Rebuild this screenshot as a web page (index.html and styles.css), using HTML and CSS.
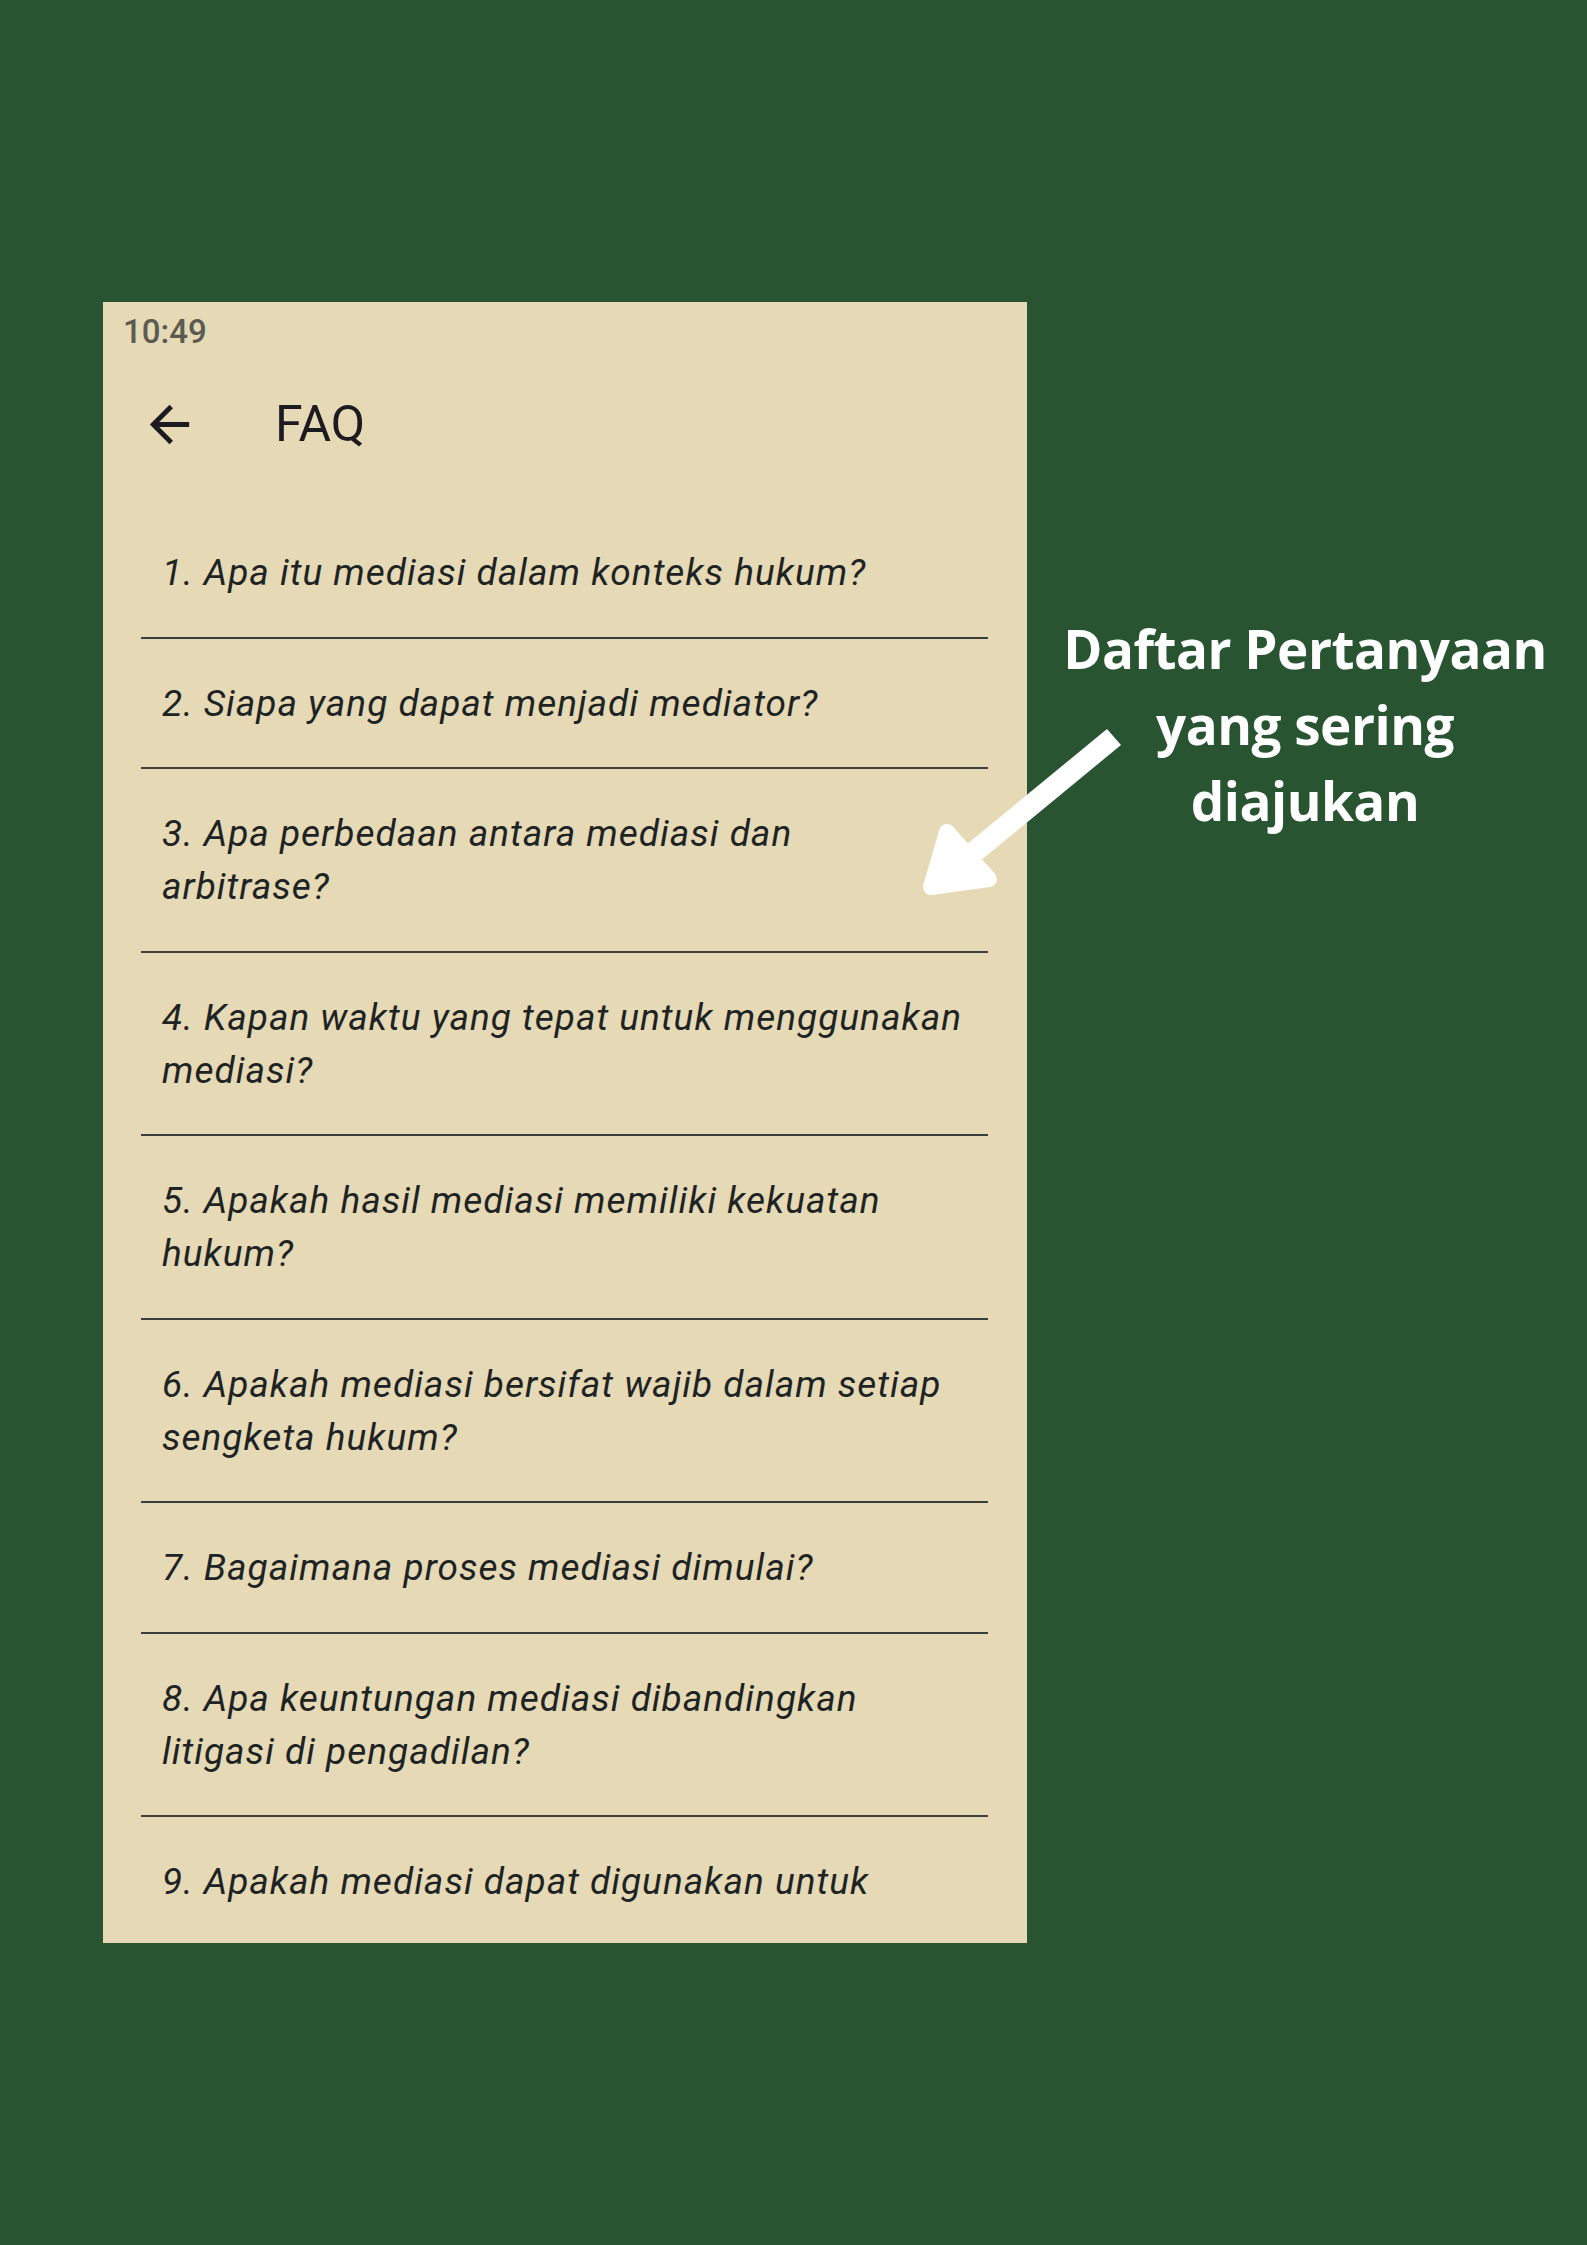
FILE: index.html
```html
<!DOCTYPE html>
<html lang="id">

<head>
    <meta charset="UTF-8">
    <meta name="viewport" content="width=device-width, initial-scale=1">
    <title>FAQ</title>
    <link rel="stylesheet" href="styles.css">
</head>

<body>
    <main class="page">
        <!-- 画面 -->
        <section class="phone">
            <div class="statusBar">
                <p class="time">10:49</p>
            </div>
            <header class="appBar">
                <button class="backButton" type="button" aria-label="Kembali">
                    <svg viewBox="0 -960 960 960" width="59" height="59">
                        <path d="M313-440l224 224-57 56-320-320 320-320 57 56-224 224h487v80H313Z" fill="#1d1b20" />
                    </svg>
                </button>
                <h1 class="appTitle">FAQ</h1>
            </header>
            <ul class="faqList">
                <li class="faqItem">1. Apa itu mediasi dalam konteks hukum?</li>
                <li class="faqItem">2. Siapa yang dapat menjadi mediator?</li>
                <li class="faqItem">3. Apa perbedaan antara mediasi dan arbitrase?</li>
                <li class="faqItem">4. Kapan waktu yang tepat untuk menggunakan mediasi?</li>
                <li class="faqItem">5. Apakah hasil mediasi memiliki kekuatan hukum?</li>
                <li class="faqItem">6. Apakah mediasi bersifat wajib dalam setiap sengketa hukum?</li>
                <li class="faqItem">7. Bagaimana proses mediasi dimulai?</li>
                <li class="faqItem">8. Apa keuntungan mediasi dibandingkan litigasi di pengadilan?</li>
                <li class="faqItem">9. Apakah mediasi dapat digunakan untuk</li>
            </ul>
        </section>

        <!-- 説明 -->
        <p class="caption">Daftar Pertanyaan<br>yang sering<br>diajukan</p>

        <svg class="pointer" viewBox="900 700 240 210" width="240" height="210">
            <polygon points="1107,729 1121,745 980,861 966,845" fill="#ffffff" />
            <polygon points="947,832 989,879 931,887" fill="#ffffff" stroke="#ffffff" stroke-width="16" stroke-linejoin="round" />
        </svg>
    </main>
</body>

</html>
```

FILE: styles.css
```css
/* リセット */
body,
ul,
li,
p,
h1 {
    margin: 0;
    padding: 0;
    box-sizing: border-box;
}

li {
    list-style: none;
}

/* レイアウト */
html {
    font-family: Roboto, 'Liberation Sans', sans-serif;
}

body {
    background-color: #285431;
}

.page {
    position: relative;
    display: flex;
    align-items: flex-start;
    min-height: 2245px;
    padding: 302px 0 0 103px;
    box-sizing: border-box;
}

/* 画面 */
.phone {
    flex-shrink: 0;
    width: 924px;
    height: 1641px;
    overflow: hidden;
    background-color: #e5d9b6;
}

.statusBar {
    height: 74px;
    padding: 10px 0 0 20px;
    box-sizing: border-box;
}

.time {
    font-size: 33px;
    font-weight: 500;
    line-height: 40px;
    color: #5c5b51;
}

.appBar {
    display: flex;
    align-items: center;
    height: 96px;
    padding-left: 37px;
}

.backButton {
    display: flex;
    padding: 0;
    border: none;
    background: none;
}

.appTitle {
    margin-left: 76px;
    font-size: 50px;
    font-weight: 400;
    line-height: 60px;
    color: #1d1b20;
}

.faqList {
    padding: 36px 39px 0 38px;
}

.faqItem {
    padding: 38px 21px 37.5px 21px;
    border-bottom: 2px solid #3b403b;
    font-size: 37px;
    font-style: italic;
    line-height: 53px;
    letter-spacing: 1px;
    color: #1e2424;
}

/* 説明 */
.caption {
    width: 556px;
    margin-top: 309px;
    font-family: 'Open Sans', 'Noto Sans', sans-serif;
    font-size: 53px;
    font-weight: 700;
    line-height: 76px;
    letter-spacing: -0.5px;
    color: #ffffff;
    text-align: center;
}

.pointer {
    position: absolute;
    top: 700px;
    left: 900px;
}
```
